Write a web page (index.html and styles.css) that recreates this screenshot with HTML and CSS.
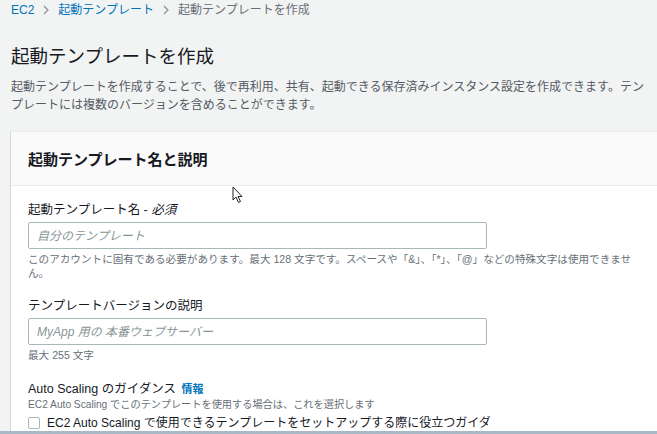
FILE: index.html
```html
<!DOCTYPE html>
<html lang="ja">
<head>
<meta charset="utf-8">
<title>起動テンプレートを作成</title>
<link rel="stylesheet" href="styles.css">
</head>
<body>
<div class="page">
  <nav class="crumbs">
    <a class="crumb-link">EC2</a>
    <svg class="chev" width="8" height="10" viewBox="0 0 8 10"><path d="M2 1 L6 5 L2 9" fill="none" stroke="#879596" stroke-width="1.2"/></svg>
    <a class="crumb-link">起動テンプレート</a>
    <svg class="chev" width="8" height="10" viewBox="0 0 8 10"><path d="M2 1 L6 5 L2 9" fill="none" stroke="#879596" stroke-width="1.2"/></svg>
    <span class="crumb-current">起動テンプレートを作成</span>
  </nav>
  <h1 class="title">起動テンプレートを作成</h1>
  <p class="desc">起動テンプレートを作成することで、後で再利用、共有、起動できる保存済みインスタンス設定を作成できます。テンプレートには複数のバージョンを含めることができます。</p>

  <section class="card">
    <header class="card-head">起動テンプレート名と説明</header>
    <div class="card-body">
      <div class="field">
        <label class="label">起動テンプレート名 - <i>必須</i></label>
        <input class="input" type="text" placeholder="自分のテンプレート">
        <p class="hint">このアカウントに固有である必要があります。最大 128 文字です。スペースや「&amp;」、「*」、「@」などの特殊文字は使用できません。</p>
      </div>
      <div class="field">
        <label class="label">テンプレートバージョンの説明</label>
        <input class="input" type="text" placeholder="MyApp 用の 本番ウェブサーバー">
        <p class="hint">最大 255 文字</p>
      </div>
      <div class="field">
        <div class="label">Auto Scaling のガイダンス <a class="info">情報</a></div>
        <p class="sub">EC2 Auto Scaling でこのテンプレートを使用する場合は、これを選択します</p>
        <div class="check-row">
          <span class="checkbox"></span>
          <span class="check-label">EC2 Auto Scaling で使用できるテンプレートをセットアップする際に役立つガイダンスを提供します。</span>
        </div>
      </div>
    </div>
  </section>
</div>
<svg class="cursor" width="12" height="18" viewBox="0 0 12 18"><path d="M1 1 L1 14 L4 11 L6.5 16.5 L8.5 15.5 L6 10.5 L10 10.5 Z" fill="#fff" stroke="#222" stroke-width="1"/></svg>
<div class="bottom-bar"></div>
</body>
</html>
```

FILE: styles.css
```css
html, body {
  margin: 0;
  padding: 0;
  height: 100%;
  overflow: hidden;
}
body {
  background: #f2f3f3;
  font-family: "Liberation Sans", "Noto Sans CJK JP", sans-serif;
  font-feature-settings: "pkna";
  color: #16191f;
}
.page {
  padding: 0 0 0 10px;
}
.crumbs {
  display: flex;
  align-items: center;
  gap: 8px;
  height: 20px;
  padding: 0 0 0 1px;
  font-size: 12px;
  line-height: 20px;
}
.crumb-link {
  color: #0073bb;
}
.crumb-current {
  color: #687078;
}
.chev {
  display: block;
}
.title {
  margin: 23px 0 0 1px;
  font-size: 18.5px;
  line-height: 28px;
  font-weight: 400;
  color: #16191f;
}
.desc {
  margin: 7px 0 0 1px;
  width: 636px;
  font-size: 12px;
  line-height: 18px;
  color: #545b64;
}
.card {
  margin-top: 17px;
  background: #fff;
  border-left: 1px solid #d5dbdb;
  border-top: 1px solid #eaeded;
}
.card-head {
  height: 53px;
  padding-left: 17px;
  display: flex;
  align-items: center;
  background: #fafafa;
  border-bottom: 1px solid #eaeded;
  font-size: 15px;
  font-weight: 700;
  color: #16191f;
}
.card-body {
  padding: 15px 0 0 17px;
}
.field {
  width: 605px;
  margin-bottom: 17px;
}
.label {
  display: block;
  font-size: 12.5px;
  line-height: 18px;
  color: #16191f;
}
.label i {
  font-style: italic;
}
.info {
  color: #0073bb;
  font-weight: 700;
  font-size: 11px;
  margin-left: 2px;
}
.input {
  display: block;
  box-sizing: border-box;
  width: 459px;
  height: 27px;
  margin-top: 3px;
  padding: 0 8px;
  border: 1px solid #aab7b8;
  border-radius: 2px;
  background: #fff;
  font-family: inherit;
  font-feature-settings: "pkna";
  font-size: 12px;
}
.input::placeholder {
  color: #879596;
  font-style: italic;
}
.hint {
  margin: 4px 0 0;
  font-size: 10.6px;
  line-height: 13.5px;
  color: #687078;
}
.sub {
  margin: 0;
  font-size: 10.2px;
  line-height: 14px;
  color: #687078;
}
.check-row {
  display: flex;
  align-items: flex-start;
  gap: 7px;
  margin-top: 2px;
  width: 474px;
}
.checkbox {
  flex: none;
  box-sizing: border-box;
  width: 12px;
  height: 12px;
  margin-top: 3px;
  border: 1px solid #aab7b8;
  border-radius: 2px;
  background: #fff;
}
.check-label {
  font-size: 12px;
  line-height: 19px;
  color: #16191f;
}
.cursor {
  position: absolute;
  left: 232px;
  top: 186px;
}
.bottom-bar {
  position: fixed;
  left: 0;
  right: 0;
  bottom: 0;
  height: 3px;
  background: #aab7c4;
}
```
